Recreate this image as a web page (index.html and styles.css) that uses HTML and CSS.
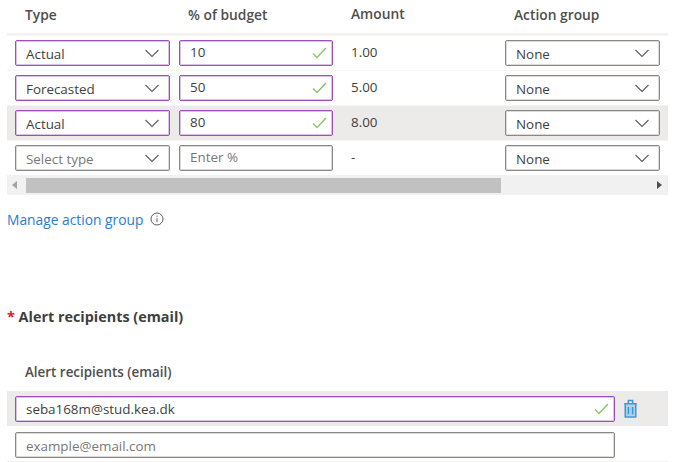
FILE: index.html
```html
<!DOCTYPE html>
<html lang="en">
<head>
    <meta charset="UTF-8">
    <title>Alert conditions</title>
    <link rel="stylesheet" href="styles.css">
</head>
<body>
    <section class="grid-wrap">
        <div class="row head">
            <div class="th type-th">Type</div>
            <div class="th budget-th">% of budget</div>
            <div class="th amount">Amount</div>
            <div class="th group-th">Action group</div>
        </div>
        <div class="row">
            <div class="ctl valid"><span>Actual</span><svg class="chev" viewBox="0 0 16 9"><path d="M1.5 1l6.5 6.5L14.500 1"/></svg></div>
            <div class="ctl valid num"><span>10</span><svg class="check" viewBox="0 0 15 12"><path d="M1 6.500l4 4L14 1"/></svg></div>
            <div class="amount">1.00</div>
            <div class="ctl plain"><span>None</span><svg class="chev" viewBox="0 0 16 9"><path d="M1.5 1l6.5 6.5L14.500 1"/></svg></div>
        </div>
        <div class="row">
            <div class="ctl valid"><span>Forecasted</span><svg class="chev" viewBox="0 0 16 9"><path d="M1.5 1l6.5 6.5L14.500 1"/></svg></div>
            <div class="ctl valid num"><span>50</span><svg class="check" viewBox="0 0 15 12"><path d="M1 6.500l4 4L14 1"/></svg></div>
            <div class="amount">5.00</div>
            <div class="ctl plain"><span>None</span><svg class="chev" viewBox="0 0 16 9"><path d="M1.5 1l6.5 6.5L14.500 1"/></svg></div>
        </div>
        <div class="row hover">
            <div class="ctl valid"><span>Actual</span><svg class="chev" viewBox="0 0 16 9"><path d="M1.5 1l6.5 6.5L14.500 1"/></svg></div>
            <div class="ctl valid num"><span>80</span><svg class="check" viewBox="0 0 15 12"><path d="M1 6.500l4 4L14 1"/></svg></div>
            <div class="amount">8.00</div>
            <div class="ctl plain"><span>None</span><svg class="chev" viewBox="0 0 16 9"><path d="M1.5 1l6.5 6.5L14.500 1"/></svg></div>
        </div>
        <div class="row">
            <div class="ctl plain ph"><span>Select type</span><svg class="chev" viewBox="0 0 16 9"><path d="M1.5 1l6.5 6.5L14.500 1"/></svg></div>
            <div class="ctl plain ph num"><span>Enter %</span></div>
            <div class="amount">-</div>
            <div class="ctl plain"><span>None</span><svg class="chev" viewBox="0 0 16 9"><path d="M1.5 1l6.5 6.5L14.500 1"/></svg></div>
        </div>
        <div class="scrollbar">
            <i class="arrow left"></i>
            <div class="thumb"></div>
            <i class="arrow right"></i>
        </div>
    </section>

    <p class="manage">
        <a href="#">Manage action group</a>
        <svg class="info" viewBox="0 0 14 14"><circle cx="7" cy="7" r="6"/><path d="M7 6.200v4M7 3.600v1.200"/></svg>
    </p>

    <h2 class="section-title"><span class="req">*</span> Alert recipients (email)</h2>

    <div class="email-label">Alert recipients (email)</div>
    <div class="email-row hover">
        <div class="ctl valid email"><span>seba168m@stud.kea.dk</span><svg class="check" viewBox="0 0 15 12"><path d="M1 6.500l4 4L14 1"/></svg></div>
        <svg class="trash" viewBox="0 0 14 18">
            <path class="trash-fill" d="M2.500 5h9v11.500h-9z"/>
            <path d="M1 4.500h12M5 4V1.500h4V4M2 4.500V17h10V4.500M5 7.500v7M9 7.500v7"/>
        </svg>
    </div>
    <div class="email-row last">
        <div class="ctl plain ph email"><span>example@email.com</span></div>
    </div>
</body>
</html>
```

FILE: styles.css
```css
* {
    margin: 0;
    padding: 0;
    box-sizing: border-box;
}

body {
    font-family: 'Open Sans', 'Noto Sans', sans-serif;
    font-size: 13.4px;
    color: #403f3e;
    background-color: #fff;
    padding: 0 11px 0 7px;
    overflow: hidden;
}

.row {
    display: grid;
    grid-template-columns: 155px 154px 154px 155px;
    column-gap: 9px;
    align-items: center;
    height: 35px;
    padding-left: 8px;
    border-top: 1px solid #f6f5f4;
}

.head {
    height: 35px;
    border-top: 0;
    border-bottom: 2px solid #f3f2f1;
    padding-bottom: 4px;
}

.th {
    font-size: 13.8px;
    font-weight: 600;
    padding-left: 10px;
    color: #504e4c;
}

.th.budget-th,
.th.group-th {
    padding-left: 9px;
}

.th.amount {
    padding-left: 9px;
}

.amount {
    padding-left: 9px;
    padding-bottom: 2px;
}

.hover {
    background-color: #edebe9;
}

.ctl {
    display: flex;
    align-items: center;
    justify-content: space-between;
    height: 26px;
    padding: 0 9px 0 10px;
    background-color: #fff;
    border: 1px solid #8a8886;
    border-radius: 2px;
    box-shadow: inset 0 0 0 1px rgba(138, 136, 134, 0.3);
}

.ctl span {
    padding-top: 1px;
}

.num span {
    padding-top: 0;
    padding-bottom: 2px;
}

.valid {
    border-color: #9b4fb8;
    box-shadow: inset 0 0 0 1px rgba(155, 79, 184, 0.35);
}

.ph span {
    color: #797775;
}

.chev {
    width: 16px;
    height: 9px;
    fill: none;
    stroke: #605e5c;
    stroke-width: 1.1;
}

.check {
    width: 15px;
    height: 12px;
    margin-right: -4px;
    fill: none;
    stroke: #8cc265;
    stroke-width: 1.4;
}

.scrollbar {
    display: flex;
    align-items: center;
    height: 20px;
    background-color: #f1f1f1;
}

.thumb {
    width: 475px;
    height: 15px;
    margin-left: 9px;
    background-color: #c1c1c1;
}

.arrow {
    width: 0;
    height: 0;
    border-top: 4px solid transparent;
    border-bottom: 4px solid transparent;
}

.arrow.left {
    margin-left: 5px;
    border-right: 5px solid #a3a3a3;
}

.arrow.right {
    margin-left: auto;
    margin-right: 6px;
    border-left: 5px solid #505050;
}

.manage {
    display: flex;
    align-items: center;
    gap: 7px;
    margin-top: 14px;
    height: 20px;
    font-size: 13.8px;
}

.manage a {
    color: #2b7cd3;
    text-decoration: none;
}

.info {
    width: 14px;
    height: 14px;
    fill: none;
    stroke: #605e5c;
    stroke-width: 1;
}

.section-title {
    font-size: 14.4px;
    font-weight: 700;
    margin-top: 78px;
    height: 20px;
    line-height: 20px;
}

.req {
    color: #e81123;
}

.email-label {
    font-weight: 600;
    color: #504e4c;
    margin-top: 35px;
    padding-left: 18px;
    height: 20px;
    line-height: 20px;
}

.email-row {
    display: flex;
    align-items: center;
    gap: 8px;
    height: 35px;
    padding-left: 8px;
    margin-top: 9px;
}

.email-row.last {
    align-items: flex-start;
    margin-top: 1px;
    padding-top: 5px;
    border-bottom: 1px solid #f3f2f1;
}

.email {
    width: 600px;
}

.trash {
    width: 15px;
    height: 19px;
    fill: none;
    stroke: #3f97d8;
    stroke-width: 1.400;
}

.trash-fill {
    fill: #a9d2f0;
    stroke: none;
}
```
